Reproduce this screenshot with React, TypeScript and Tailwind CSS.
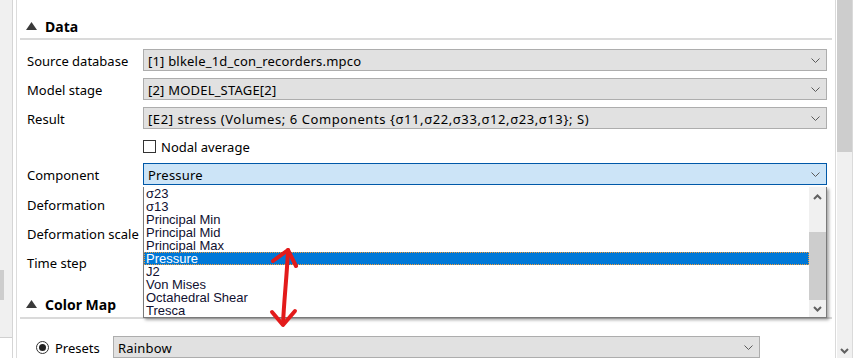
import React from "react";

const Chevron = ({ className = "" }: { className?: string }) => (
  <svg width="9" height="5" viewBox="0 0 9 5" className={className}>
    <polyline points="0.5,0.5 4.5,4.5 8.5,0.5" fill="none" stroke="#5a5a5a" strokeWidth="1" />
  </svg>
);

const BoldChevron = ({ up = false }: { up?: boolean }) => (
  <svg width="9" height="6" viewBox="0 0 9 6">
    <polyline
      points={up ? "1,5 4.5,1.5 8,5" : "1,1 4.5,4.5 8,1"}
      fill="none"
      stroke="#606060"
      strokeWidth="2"
    />
  </svg>
);

const Triangle = () => (
  <svg width="11" height="8" viewBox="0 0 11 8">
    <polygon points="0,8 5.5,0 11,8" fill="#3a3a3a" />
  </svg>
);

const Combo = ({
  text,
  active = false,
  wide = false,
}: {
  text: string;
  active?: boolean;
  wide?: boolean;
}) => (
  <div
    className={
      "flex h-[22px] w-[684px] items-center justify-between border pl-[4px] pr-[6px] " +
      (active ? "border-[#0058a8] bg-[#cce4f7]" : "border-[#adadad] bg-[#e1e1e1]")
    }
  >
    <span className={"whitespace-nowrap pt-[2px] " + (wide ? "tracking-[0.58px]" : "tracking-[0.2px]")}>{text}</span>
    <Chevron />
  </div>
);

const Row = ({ label, children }: { label: string; children?: React.ReactNode }) => (
  <div className="flex h-[22px] items-center">
    <div className="w-[116px] shrink-0 whitespace-nowrap pt-[2px]">{label}</div>
    {children}
  </div>
);

const items = [
  "σ23",
  "σ13",
  "Principal Min",
  "Principal Mid",
  "Principal Max",
  "Pressure",
  "J2",
  "Von Mises",
  "Octahedral Shear",
  "Tresca",
];

export default function App() {
  return (
    <div className="relative flex h-[358px] w-[857px] overflow-hidden bg-white font-['Noto_Sans',sans-serif] text-[13px] leading-none text-black">
      {/* left strip */}
      <div className="flex w-[12px] shrink-0 flex-col">
        <div className="relative h-[337px] bg-[#f0f0f0]">
          <div className="absolute left-0 top-[270px] h-[30px] w-[4px] bg-[#cdcdcd]" />
        </div>
        <div className="flex-1 border-t border-[#d0d0d0] bg-white" />
      </div>
      <div className="w-[1px] shrink-0 bg-[#d5d5d5]" />
      <div className="w-[3px] shrink-0 bg-white" />
      <div className="w-[1px] shrink-0 bg-[#dcdcdc]" />

      {/* main content */}
      <div className="flex w-[818px] shrink-0 flex-col">
        <div className="flex h-[39px] items-end pb-[3px] pl-[9px]">
          <div className="flex h-[18px] items-center gap-[8px]">
            <Triangle />
            <span className="pt-[2px] text-[14px] font-bold">Data</span>
          </div>
        </div>
        <div className="ml-[3px] mr-[3px] h-[2px] bg-[#dadada]" />

        <div className="mt-[9px] flex flex-col gap-[7px] pl-[10px]">
          <Row label="Source database">
            <Combo text="[1] blkele_1d_con_recorders.mpco" />
          </Row>
          <Row label="Model stage">
            <Combo text="[2] MODEL_STAGE[2]" />
          </Row>
          <Row label="Result">
            <Combo text="[E2] stress (Volumes; 6 Components {σ11,σ22,σ33,σ12,σ23,σ13}; S)" wide />
          </Row>
          <div className="flex h-[20px] items-center pl-[116px]">
            <div className="h-[13px] w-[13px] border border-[#333333] bg-white" />
            <span className="ml-[5px] pt-[2px]">Nodal average</span>
          </div>
          <Row label="Component">
            <Combo text="Pressure" active />
          </Row>
          <div className="flex flex-col gap-[7px] pt-[1px]">
            <Row label="Deformation">
              <Combo text="" />
            </Row>
            <Row label="Deformation scale">
              <Combo text="" />
            </Row>
            <Row label="Time step">
              <Combo text="" />
            </Row>
          </div>
        </div>

        <div className="mt-[22px] flex h-[18px] items-center gap-[8px] pl-[9px]">
          <Triangle />
          <span className="pt-[2px] text-[14px] font-bold">Color Map</span>
        </div>
        <div className="ml-[3px] mr-[3px] mt-[4px] h-[2px] bg-[#dadada]" />
        <div className="mt-[17px] flex h-[22px] items-center pl-[19px]">
          <div className="flex h-[13px] w-[13px] items-center justify-center rounded-full border border-[#333333] bg-white">
            <div className="h-[7px] w-[7px] rounded-full bg-[#222222]" />
          </div>
          <span className="ml-[6px] w-[58px] pt-[2px]">Presets</span>
          <div className="flex h-[22px] w-[647px] items-center justify-between border border-[#adadad] bg-[#e1e1e1] pl-[4px] pr-[6px]">
            <span className="pt-[2px] tracking-[0.2px]">Rainbow</span>
            <Chevron />
          </div>
        </div>
      </div>

      {/* right scrollbar */}
      <div className="w-[1px] shrink-0 bg-[#dadada]" />
      <div className="w-[1px] shrink-0 bg-white" />
      <div className="relative flex w-[15px] shrink-0 flex-col bg-[#f0f0f0]">
        <div className="h-[152px] w-full bg-[#cdcdcd]" />
        <div className="flex-1" />
        <div className="flex h-[14px] items-center justify-center">
          <BoldChevron />
        </div>
      </div>
      <div className="w-[1px] shrink-0 bg-[#dadada]" />
      <div className="flex-1 bg-white" />

      {/* dropdown popup */}
      <div className="absolute left-[143px] top-[187px] flex h-[131px] w-[684px] border-b border-l border-r border-[#7a7a7a] bg-white shadow-[2px_2px_3px_rgba(0,0,0,0.35)] font-['Liberation_Sans',sans-serif] text-[13px]">
        <div className="flex flex-1 flex-col">
          {items.map((it) => (
            <div
              key={it}
              className={
                "flex h-[13px] items-center whitespace-nowrap pl-[2px] leading-[13px] " +
                (it === "Pressure"
                  ? "bg-[#0078d7] text-white outline-1 -outline-offset-1 outline-dotted outline-[#f29c38]"
                  : "text-[#101030]")
              }
            >
              {it}
            </div>
          ))}
        </div>
        <div className="flex w-[17px] flex-col bg-[#f0f0f0]">
          <div className="flex h-[20px] items-center justify-center">
            <BoldChevron up />
          </div>
          <div className="mt-[25px] h-[68px] w-full bg-[#cdcdcd]" />
          <div className="flex flex-1 items-center justify-center">
            <BoldChevron />
          </div>
        </div>
      </div>

      {/* red annotation arrow */}
      <svg
        className="absolute left-[262px] top-[244px]"
        width="45"
        height="88"
        viewBox="262 244 45 88"
      >
        <g fill="none" stroke="#e31b1b" strokeWidth="4" strokeLinecap="round" strokeLinejoin="round">
          <path d="M288,250 C287,275 284,300 283,324" />
          <path d="M273,261 L288,250 L296,266" />
          <path d="M272,312 L283,325 L295,311" />
        </g>
      </svg>
    </div>
  );
}
